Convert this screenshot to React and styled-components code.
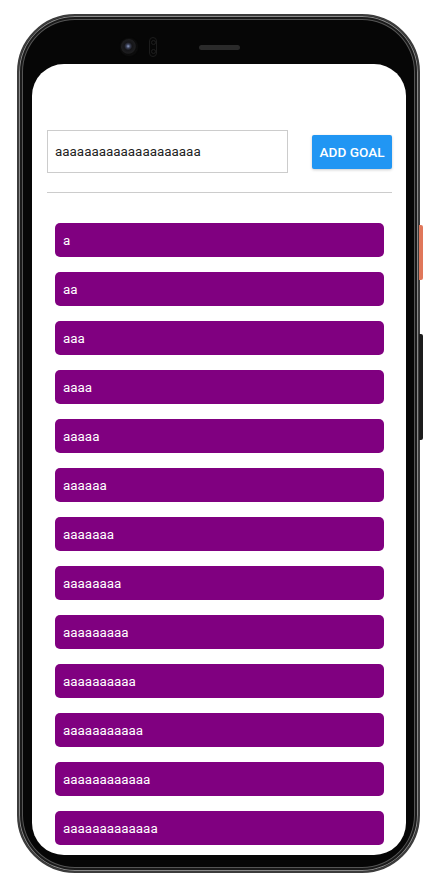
import React, { useState } from 'react'
import styled, { createGlobalStyle } from 'styled-components';

const GlobalStyle = createGlobalStyle`
  html, body {
    margin: 0;
    padding: 0;
    background: #fff;
    font-family: Roboto, "Liberation Sans", sans-serif;
  }
`;

const initialGoals = Array.from({ length: 13 }, (_, i) => 'a'.repeat(i + 1));

const App = () => {
    const [text, setText] = useState('aaaaaaaaaaaaaaaaaaaa');
    const [goals, setGoals] = useState(initialGoals);

    const addGoal = () => {
        if (!text) return;
        setGoals((prev) => [...prev, text]);
    }

    return (
        <Page>
            <GlobalStyle />
            <Phone>
                <SideButton top={209} height={55} color="#e0775a" />
                <SideButton top={318} height={106} color="#1c1c1c" />
                <TopBezel>
                    <Camera />
                    <Sensor>
                        <SensorDot />
                        <SensorDot />
                    </Sensor>
                    <Speaker />
                </TopBezel>
                <Screen>
                    <InputRow>
                        <GoalInput value={text} onChange={(e) => setText(e.target.value)} />
                        <AddButton onClick={addGoal}>ADD GOAL</AddButton>
                    </InputRow>
                    <Divider />
                    <GoalList>
                        {goals.map((g, i) => (
                            <GoalItem key={i}>{g}</GoalItem>
                        ))}
                    </GoalList>
                </Screen>
            </Phone>
        </Page>
    )
}

export default App;

const Page = styled.div`
  width: 427px;
  height: 877px;
  padding: 14px 0 0 17px;
  box-sizing: border-box;
  overflow: hidden;
`;

const Phone = styled.div`
  position: relative;
  width: 403px;
  height: 859px;
  box-sizing: border-box;
  border-radius: 58px;
  background: #060606;
  border: 2px solid #3c3c3c;
  box-shadow: inset 0 0 0 1px #8a8a8a, inset 0 0 0 3px #1a1a1a, inset 0 0 0 4px #555;
  padding: 0 12px 16px 13px;
  display: flex;
  flex-direction: column;
`;

const SideButton = styled.div`
  position: absolute;
  right: -5px;
  top: ${(p) => p.top}px;
  width: 4px;
  height: ${(p) => p.height}px;
  background: ${(p) => p.color};
  border-radius: 0 2px 2px 0;
`;

const TopBezel = styled.div`
  height: 48px;
  flex-shrink: 0;
  display: flex;
  align-items: center;
  padding-left: 89px;
  padding-top: 14px;
  box-sizing: border-box;
`;

const Camera = styled.div`
  width: 16px;
  height: 16px;
  border-radius: 50%;
  background: radial-gradient(circle at 45% 45%, #8fa0c8 0, #3a3f55 2px, #151518 4px, #1d1d1f 7px, #0c0c0c 8px);
  box-shadow: 0 0 2px #222;
`;

const Sensor = styled.div`
  margin-left: 12px;
  width: 8px;
  height: 20px;
  border-radius: 4px;
  border: 1px solid #1c1c1c;
  box-sizing: border-box;
  display: flex;
  flex-direction: column;
  justify-content: space-around;
  align-items: center;
`;

const SensorDot = styled.div`
  width: 5px;
  height: 5px;
  border-radius: 50%;
  border: 1px solid #1e1e1e;
  box-sizing: border-box;
`;

const Speaker = styled.div`
  margin-left: 42px;
  width: 41px;
  height: 5px;
  border-radius: 3px;
  background: #2a2a2a;
`;

const Screen = styled.div`
  flex: 1;
  background: #fff;
  border-radius: 32px;
  overflow: hidden;
  padding: 66px 14px 0 15px;
  box-sizing: border-box;
`;

const InputRow = styled.div`
  display: flex;
  justify-content: space-between;
  align-items: center;
`;

const GoalInput = styled.input`
  width: 241px;
  height: 43px;
  box-sizing: border-box;
  border: 1px solid #cccccc;
  padding: 0 7px;
  font-family: Roboto, "Liberation Sans", sans-serif;
  font-size: 13.4px;
  color: #222;
  outline: none;
`;

const AddButton = styled.button`
  width: 80px;
  height: 34px;
  border: none;
  border-radius: 2px;
  background: #2196f3;
  color: #fff;
  font-family: Roboto, "Liberation Sans", sans-serif;
  font-weight: 500;
  font-size: 13.6px;
  padding: 0;
  box-shadow: 0 1px 3px rgba(0, 0, 0, 0.2);
  cursor: pointer;
`;

const Divider = styled.div`
  height: 1px;
  background: #cccccc;
  margin-top: 19px;
  margin-bottom: 30px;
`;

const GoalList = styled.div`
  display: flex;
  flex-direction: column;
  gap: 15px;
  padding: 0 8px;
`;

const GoalItem = styled.div`
  height: 34px;
  flex-shrink: 0;
  box-sizing: border-box;
  border-radius: 5px;
  background: #800080;
  color: #fff;
  font-size: 13.4px;
  padding-left: 8px;
  display: flex;
  align-items: center;
`;
